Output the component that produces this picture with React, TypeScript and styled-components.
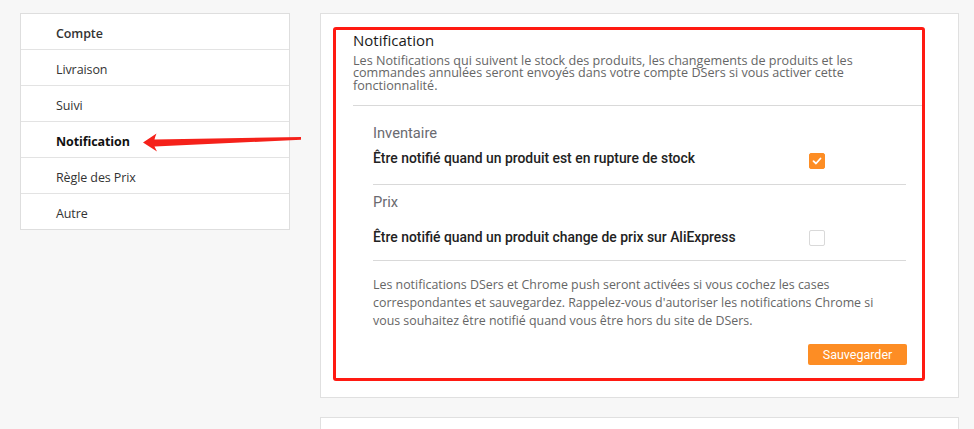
import React from "react";
import styled, { createGlobalStyle } from "styled-components";

const GlobalStyle = createGlobalStyle`
  html, body {
    margin: 0;
    padding: 0;
    background: #f7f7f7;
  }
  body {
    font-family: "Open Sans", "Liberation Sans", sans-serif;
  }
  * { box-sizing: border-box; }
`;

const Page = styled.div`
  position: relative;
  display: flex;
  align-items: flex-start;
  gap: 30px;
  padding: 13px 0 0 20px;
  height: 429px;
  overflow: hidden;
`;

const Sidebar = styled.nav`
  width: 270px;
  background: #fff;
  border: 1px solid #dedede;
  display: flex;
  flex-direction: column;
`;

const NavItem = styled.div<{ $active?: boolean; $strong?: boolean }>`
  height: 36px;
  display: flex;
  align-items: center;
  padding: 4px 0 0 35px;
  border-top: 1px solid #e3e3e3;
  font-size: 12.5px;
  letter-spacing: -0.1px;
  color: ${(p) => (p.$active ? "#111" : "#333")};
  font-weight: ${(p) => (p.$active ? 700 : p.$strong ? 600 : 400)};
  &:first-child {
    border-top: none;
    height: 35px;
  }
`;

const MainColumn = styled.div`
  display: flex;
  flex-direction: column;
  gap: 19px;
`;

const Card = styled.section`
  position: relative;
  width: 639px;
  background: #fff;
  border: 1px solid #e0e0e0;
  padding: 16px 33px 32px 32px;
`;

const EmptyCard = styled.section`
  width: 639px;
  height: 60px;
  background: #fff;
  border: 1px solid #e0e0e0;
`;

const Highlight = styled.div`
  position: absolute;
  left: 12px;
  top: 13px;
  width: 592px;
  height: 354px;
  border: 3px solid #ff1a12;
  border-radius: 3px;
  pointer-events: none;
`;

const Header = styled.header`
  padding-bottom: 13px;
  border-bottom: 1px solid #d9d9d9;
`;

const Title = styled.h2`
  margin: 0;
  font-size: 15px;
  line-height: 20px;
  font-weight: 500;
  color: #1a1a1a;
`;

const Description = styled.p`
  margin: 5px 0 0;
  font-size: 12.6px;
  line-height: 12.3px;
  color: #666;
`;

const Section = styled.div`
  padding: 0 19px 0 20px;
`;

const Group = styled.div<{ $pad: number }>`
  border-bottom: 1px solid #d9d9d9;
  padding-bottom: ${(p) => p.$pad}px;
`;

const GroupLabel = styled.div<{ $top: number }>`
  margin-top: ${(p) => p.$top}px;
  font-family: Roboto, "Liberation Sans", sans-serif;
  font-size: 14.7px;
  line-height: 20px;
  color: #6a6a70;
`;

const Row = styled.div<{ $top: number }>`
  margin-top: ${(p) => p.$top}px;
  display: flex;
  align-items: flex-start;
  justify-content: space-between;
`;

const RowText = styled.span`
  font-family: Roboto, "Liberation Sans", sans-serif;
  font-size: 13.9px;
  line-height: 20px;
  font-weight: 500;
  color: #222;
`;

const Checkbox = styled.span<{ $checked?: boolean; $offset: number }>`
  width: 16px;
  height: 16px;
  margin-top: ${(p) => p.$offset}px;
  margin-right: 81px;
  border-radius: 2px;
  display: inline-flex;
  align-items: center;
  justify-content: center;
  background: ${(p) => (p.$checked ? "#fd8d24" : "#fff")};
  border: 1px solid ${(p) => (p.$checked ? "#fd8d24" : "#d9d9d9")};
`;

const Note = styled.p`
  margin: 15px 0 0;
  font-size: 12.4px;
  line-height: 18px;
  color: #666;
`;

const Actions = styled.div`
  display: flex;
  justify-content: flex-end;
  margin-top: 14px;
`;

const SaveButton = styled.button`
  width: 99px;
  height: 21px;
  margin-right: -1px;
  border: none;
  border-radius: 2px;
  background: #fd8d24;
  color: #fff;
  font-family: Roboto, "Liberation Sans", sans-serif;
  font-size: 12.5px;
  padding: 0;
  cursor: pointer;
`;

const Arrow = styled.svg`
  position: absolute;
  left: 140px;
  top: 129px;
  pointer-events: none;
`;

const CheckMark = () => (
  <svg width="10" height="10" viewBox="0 0 10 10">
    <path d="M1.5 5.2 L4 7.5 L8.5 2.5" fill="none" stroke="#fff" strokeWidth="1.8" strokeLinecap="round" strokeLinejoin="round" />
  </svg>
);

export default function App() {
  return (
    <>
      <GlobalStyle />
      <Page>
        <Sidebar>
          <NavItem $strong>Compte</NavItem>
          <NavItem>Livraison</NavItem>
          <NavItem>Suivi</NavItem>
          <NavItem $active>Notification</NavItem>
          <NavItem>Règle des Prix</NavItem>
          <NavItem>Autre</NavItem>
        </Sidebar>
        <MainColumn>
          <Card>
            <Header>
              <Title>Notification</Title>
              <Description>
                Les Notifications qui suivent le stock des produits, les changements de produits et les
                <br />
                commandes annulées seront envoyés dans votre compte DSers si vous activer cette
                <br />
                fonctionnalité.
              </Description>
            </Header>
            <Section>
              <Group $pad={15}>
                <GroupLabel $top={17}>Inventaire</GroupLabel>
                <Row $top={5}>
                  <RowText>Être notifié quand un produit est en rupture de stock</RowText>
                  <Checkbox $checked $offset={5}>
                    <CheckMark />
                  </Checkbox>
                </Row>
              </Group>
              <Group $pad={13}>
                <GroupLabel $top={7}>Prix</GroupLabel>
                <Row $top={15}>
                  <RowText>Être notifié quand un produit change de prix sur AliExpress</RowText>
                  <Checkbox $offset={3} />
                </Row>
              </Group>
              <Note>
                Les notifications DSers et Chrome push seront activées si vous cochez les cases
                <br />
                correspondantes et sauvegardez. Rappelez-vous d'autoriser les notifications Chrome si
                <br />
                vous souhaitez être notifié quand vous être hors du site de DSers.
              </Note>
              <Actions>
                <SaveButton>Sauvegarder</SaveButton>
              </Actions>
            </Section>
            <Highlight />
          </Card>
          <EmptyCard />
        </MainColumn>
        <Arrow width="165" height="26" viewBox="0 0 165 26">
          <path
            d="M3 13.5 L16.5 4.5 Q15 8 14.5 10.5 L161 8 L161 10.8 L14.5 17.5 Q15.5 19.5 17 22.5 Z"
            fill="#f5211a"
          />
        </Arrow>
      </Page>
    </>
  );
}
